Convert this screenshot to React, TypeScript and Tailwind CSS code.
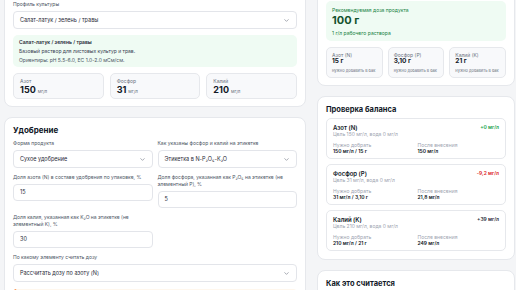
import React from 'react';
import { ChevronDown } from 'lucide-react';

function FieldLabel({ children }: { children: React.ReactNode }) {
  return <div className="text-[5px] leading-[7px] text-[#4b5563] mb-[3px]">{children}</div>;
}

function SelectBox({ value }: { value: string }) {
  return (
    <div className="h-[18px] border border-[#e3e5ea] rounded-[4px] bg-white flex items-center justify-between pl-[6px] pr-[6px] text-[5.5px] leading-[7px] text-[#1f2937]">
      <span>{value}</span>
      <ChevronDown size={7} strokeWidth={2} className="text-[#6b7280]" />
    </div>
  );
}

function InputBox({ value }: { value: string }) {
  return (
    <div className="h-[17px] border border-[#e3e5ea] rounded-[4px] bg-white flex items-center px-[6px] text-[5.5px] text-[#1f2937]">
      {value}
    </div>
  );
}

const profileStats = [
  { name: 'Азот', value: '150' },
  { name: 'Фосфор', value: '31' },
  { name: 'Калий', value: '210' },
];

const doseStats = [
  { name: 'Азот (N)', value: '15 г' },
  { name: 'Фосфор (P)', value: '3,10 г' },
  { name: 'Калий (K)', value: '21 г' },
];

const balance = [
  { name: 'Азот (N)', delta: '+0 мг/л', tone: 'text-[#16a34a]', target: 'Цель 150 мг/л, вода 0 мг/л', need: '150 мг/л / 15 г', after: '150 мг/л' },
  { name: 'Фосфор (P)', delta: '-9,2 мг/л', tone: 'text-[#dc2626]', target: 'Цель 31 мг/л, вода 0 мг/л', need: '31 мг/л / 3,10 г', after: '21,8 мг/л' },
  { name: 'Калий (K)', delta: '+39 мг/л', tone: 'text-[#1f2937]', target: 'Цель 210 мг/л, вода 0 мг/л', need: '210 мг/л / 21 г', after: '249 мг/л' },
];

export default function App() {
  return (
    <div className="w-[516px] h-[290px] overflow-hidden bg-[#f4f5f7] font-[Inter,'Noto_Sans',sans-serif]">
      <div className="flex gap-[11px] pl-[4px] -mt-[8px]">
        {/* left column: inputs */}
        <div className="w-[302px] flex flex-col gap-[10px] shrink-0">
          <div className="bg-white border border-[#e6e8ec] rounded-[8px] px-[8px] pt-[8px] pb-[7px]">
            <FieldLabel>Профиль культуры</FieldLabel>
            <SelectBox value="Салат-латук / зелень / травы" />
            <div className="mt-[6px] h-[32px] bg-[#effbf3] rounded-[5px] px-[6px] pt-[4px]">
              <div className="text-[5px] leading-[7px] font-semibold text-[#1f2937]">Салат-латук / зелень / травы</div>
              <div className="mt-[2px] text-[5px] leading-[7px] text-[#374151]">Базовый раствор для листовых культур и трав.</div>
              <div className="mt-[2px] text-[5px] leading-[7px] text-[#4b5563]">Ориентиры: pH 5.5-6.0, EC 1.0-2.0 мСм/см.</div>
            </div>
            <div className="mt-[6px] grid grid-cols-3 gap-[6px]">
              {profileStats.map((s) => (
                <div key={s.name} className="h-[26px] bg-[#f8f9fb] border border-[#e6e8ec] rounded-[5px] px-[6px] pt-[4px]">
                  <div className="text-[5px] leading-[6px] text-[#6b7280]">{s.name}</div>
                  <div className="mt-[1px] flex items-baseline gap-[2px] text-[#111827]">
                    <span className="text-[9px] leading-[10px] font-bold">{s.value}</span>
                    <span className="text-[4.5px] text-[#6b7280]">мг/л</span>
                  </div>
                </div>
              ))}
            </div>
          </div>

          <div className="bg-white border border-[#e6e8ec] rounded-[8px] px-[8px] pt-[8px] pb-[8px]">
            <div className="text-[8px] leading-[9px] font-bold text-[#111827] mb-[5px]">Удобрение</div>
            <div className="grid grid-cols-2 gap-x-[5px] gap-y-[6px]">
              <div>
                <FieldLabel>Форма продукта</FieldLabel>
                <SelectBox value="Сухое удобрение" />
              </div>
              <div>
                <FieldLabel>Как указаны фосфор и калий на этикетке</FieldLabel>
                <SelectBox value="Этикетка в N-P₂O₅-K₂O" />
              </div>
              <div>
                <FieldLabel>Доля азота (N) в составе удобрения по упаковке, %</FieldLabel>
                <InputBox value="15" />
              </div>
              <div>
                <FieldLabel>Доля фосфора, указанная как P₂O₅ на этикетке (не элементный P), %</FieldLabel>
                <InputBox value="5" />
              </div>
              <div>
                <FieldLabel>Доля калия, указанная как K₂O на этикетке (не элементный K), %</FieldLabel>
                <InputBox value="30" />
              </div>
              <div />
              <div className="col-span-2">
                <FieldLabel>По какому элементу считать дозу</FieldLabel>
                <SelectBox value="Рассчитать дозу по азоту (N)" />
              </div>
            </div>
            <div className="mt-[7px] h-[30px] bg-[#fff7ed] border-l-[2px] border-[#f97316] rounded-[4px]" />
          </div>
        </div>

        {/* right column: results */}
        <div className="w-[198px] flex flex-col gap-[10px] shrink-0">
          <div className="bg-white border border-[#e6e8ec] rounded-[8px] px-[8px] pt-[8px] pb-[7px]">
            <div className="h-[40px] bg-[#effbf3] rounded-[5px] px-[6px] pt-[5.5px]">
              <div className="text-[5px] leading-[7px] text-[#15803d]">Рекомендуемая доза продукта</div>
              <div className="text-[11px] leading-[13px] font-bold text-[#14532d]">100 г</div>
              <div className="mt-[3px] text-[5px] leading-[7px] text-[#15803d]">1 г/л рабочего раствора</div>
            </div>
            <div className="mt-[6px] grid grid-cols-3 gap-[5px]">
              {doseStats.map((s) => (
                <div key={s.name} className="h-[31px] bg-[#f8f9fb] border border-[#e6e8ec] rounded-[5px] px-[5px] pt-[4px]">
                  <div className="text-[5px] leading-[6px] text-[#6b7280]">{s.name}</div>
                  <div className="text-[6.5px] leading-[7px] font-bold text-[#111827]">{s.value}</div>
                  <div className="mt-[3px] text-[4px] leading-[5px] text-[#6b7280]">нужно добавить в бак</div>
                </div>
              ))}
            </div>
          </div>

          <div className="bg-white border border-[#e6e8ec] rounded-[8px] px-[8px] pt-[8px] pb-[8px]">
            <div className="text-[7.5px] leading-[9px] font-bold text-[#111827] mb-[4px]">Проверка баланса</div>
            <div className="flex flex-col gap-[5px]">
              {balance.map((b) => (
                <div key={b.name} className="h-[41px] border border-[#e6e8ec] rounded-[5px] px-[6px] pt-[4.5px]">
                  <div className="flex justify-between items-center">
                    <span className="text-[6px] leading-[7px] font-semibold text-[#111827]">{b.name}</span>
                    <span className={`text-[5px] leading-[7px] font-semibold ${b.tone}`}>{b.delta}</span>
                  </div>
                  <div className="text-[5px] leading-[6px] text-[#9ca3af]">{b.target}</div>
                  <div className="mt-[5px] grid grid-cols-2 gap-[3px]">
                    <div>
                      <div className="text-[5px] leading-[6px] text-[#9ca3af]">Нужно добрать</div>
                      <div className="text-[5px] leading-[7px] font-semibold text-[#111827]">{b.need}</div>
                    </div>
                    <div>
                      <div className="text-[5px] leading-[6px] text-[#9ca3af]">После внесения</div>
                      <div className="text-[5px] leading-[7px] font-semibold text-[#111827]">{b.after}</div>
                    </div>
                  </div>
                </div>
              ))}
            </div>
          </div>

          <div className="bg-white border border-[#e6e8ec] rounded-[8px] px-[8px] pt-[8px] h-[40px]">
            <div className="text-[7.5px] leading-[9px] font-bold text-[#111827]">Как это считается</div>
          </div>
        </div>
      </div>
    </div>
  );
}
